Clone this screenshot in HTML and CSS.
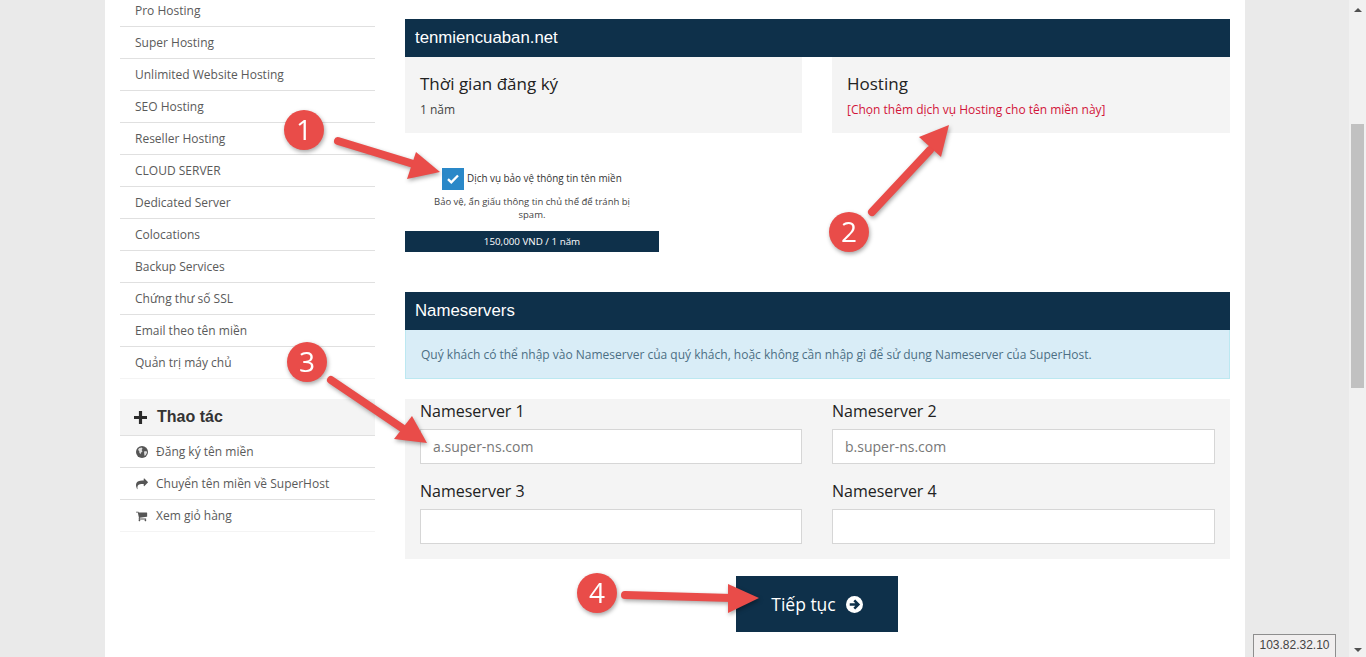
FILE: index.html
```html
<!DOCTYPE html>
<html lang="vi">
<head>
<meta charset="utf-8">
<title>Đăng ký tên miền</title>
<link rel="stylesheet" href="styles.css">
</head>
<body>
<div class="page">
  <aside class="sidebar">
    <ul class="menu">
      <li class="first">Pro Hosting</li>
      <li>Super Hosting</li>
      <li>Unlimited Website Hosting</li>
      <li>SEO Hosting</li>
      <li>Reseller Hosting</li>
      <li>CLOUD SERVER</li>
      <li>Dedicated Server</li>
      <li>Colocations</li>
      <li>Backup Services</li>
      <li>Chứng thư số SSL</li>
      <li>Email theo tên miền</li>
      <li class="last">Quản trị máy chủ</li>
    </ul>
    <div class="panel-head">
      <svg class="plus" viewBox="0 0 14 14"><path d="M5.3 0h3.4v5.3H14v3.4H8.7V14H5.3V8.7H0V5.3h5.3z"/></svg>
      <span>Thao tác</span>
    </div>
    <ul class="menu actions">
      <li>
        <svg class="ico" viewBox="0 0 12 12"><circle cx="6" cy="6" r="6" fill="#555"/><path d="M3 2.2l2.6-.6 1 1.2-1 1.3.9 1.2-1.5 1.4-.6 1.6-1-1.6-.2-1.8-1.2-.8zM8 5.6l2.4-.5.7 1.4-1.4 2.7-1.3.6z" fill="#ddd"/></svg>
        Đăng ký tên miền
      </li>
      <li>
        <svg class="ico" viewBox="0 0 1792 1792"><path fill="#555" d="M1792 640q0 26-19 45l-512 512q-19 19-45 19t-45-19-19-45v-256h-224q-98 0-175.500 6t-154 21.500-133 42.500-105.500 69.500-80 101-48.500 138.500-17.500 181q0 55 5 123 0 6 2.500 23.500t2.500 26.500q0 15-8.500 25t-23.500 10q-16 0-28-17-7-9-13-22t-13.500-30-10.500-24q-127-285-127-451 0-199 53-333 162-403 875-403h224v-256q0-26 19-45t45-19 45 19l512 512q19 19 19 45z"/></svg>
        Chuyển tên miền về SuperHost
      </li>
      <li class="last">
        <svg class="ico" viewBox="0 0 1792 1792"><path fill="#555" d="M640 1536q0 52-38 90t-90 38-90-38-38-90 38-90 90-38 90 38 38 90zm896 0q0 52-38 90t-90 38-90-38-38-90 38-90 90-38 90 38 38 90zm128-1088v512q0 24-16.500 42.500t-40.500 21.500l-1044 122q13 60 13 70 0 16-24 64h920q26 0 45 19t19 45-19 45-45 19h-1024q-26 0-45-19t-19-45q0-11 8-31.500t16-36 21.500-40 15.500-29.500l-177-823h-204q-26 0-45-19t-19-45 19-45 45-19h256q16 0 28.500 6.500t19.500 15.500 13 24.500 8 26 5.500 29.500 4.500 26h1201q26 0 45 19t19 45z"/></svg>
        Xem giỏ hàng
      </li>
    </ul>
  </aside>

  <main class="content">
    <h2 class="bar">tenmiencuaban.net</h2>
    <div class="two-col">
      <div class="info">
        <h3>Thời gian đăng ký</h3>
        <p>1 năm</p>
      </div>
      <div class="info">
        <h3>Hosting</h3>
        <p class="pick">[Chọn thêm dịch vụ Hosting cho tên miền này]</p>
      </div>
    </div>

    <div class="addon">
      <div class="addon-title">
        <span class="check"><svg viewBox="0 0 12 10"><path d="M1 5.200l3.300 3.200L11 1.500" fill="none" stroke="#fff" stroke-width="2.300"/></svg></span>
        <span class="addon-name">Dịch vụ bảo vệ thông tin tên miền</span>
      </div>
      <p class="addon-desc">Bảo vệ, ẩn giấu thông tin chủ thể để tránh bị spam.</p>
      <div class="addon-price">150,000 VND / 1 năm</div>
    </div>

    <h2 class="bar">Nameservers</h2>
    <div class="alert">Quý khách có thể nhập vào Nameserver của quý khách, hoặc không cần nhập gì để sử dụng Nameserver của SuperHost.</div>
    <form class="ns-form">
      <label class="field"><span>Nameserver 1</span><input type="text" placeholder="a.super-ns.com"></label>
      <label class="field"><span>Nameserver 2</span><input type="text" placeholder="b.super-ns.com"></label>
      <label class="field"><span>Nameserver 3</span><input type="text"></label>
      <label class="field"><span>Nameserver 4</span><input type="text"></label>
    </form>
    <div class="actions-row">
      <button class="next" type="button">Tiếp tục
        <svg viewBox="0 0 16 16"><circle cx="8" cy="8" r="8" fill="#fff"/><path d="M3.500 8h8M7.800 4.200L11.600 8l-3.800 3.800" fill="none" stroke="#0e304a" stroke-width="2.400"/></svg>
      </button>
    </div>
  </main>
</div>

<svg class="notes" viewBox="0 0 1366 657">
  <g class="note">
    <path class="shaft" d="M338 141L420 166"/>
    <path class="head" d="M416 152L407 179L440 172z"/>
    <circle cx="304" cy="130" r="20"/>
    <text x="304" y="140">1</text>
  </g>
  <g class="note">
    <path class="shaft" d="M872 212L930 150"/>
    <path class="head" d="M949 125L919 137L941 157z"/>
    <circle cx="849" cy="232" r="20"/>
    <text x="849" y="242">2</text>
  </g>
  <g class="note">
    <path class="shaft" d="M331 380L402 428"/>
    <path class="head" d="M427 443L394 439L412 416z"/>
    <circle cx="307" cy="362" r="20"/>
    <text x="307" y="372">3</text>
  </g>
  <g class="note">
    <path class="shaft" d="M625 595L732 598"/>
    <path class="head" d="M728 584L759 598L728 613z"/>
    <circle cx="597" cy="593" r="20"/>
    <text x="597" y="603">4</text>
  </g>
</svg>

<div class="ip">103.82.32.10</div>
<div class="scrollbar">
  <span class="up"></span>
  <span class="thumb"></span>
  <span class="down"></span>
</div>
</body>
</html>
```
FILE: styles.css
```css
* { box-sizing: border-box; }
html, body { margin: 0; height: 657px; overflow: hidden; }
body { background: #eaeaea; font-family: "Open Sans", sans-serif; color: #333; }

.page {
  width: 1140px;
  height: 657px;
  margin-left: 105px;
  padding: 0 15px;
  background: #fff;
  display: flex;
  gap: 30px;
  overflow: hidden;
}

.sidebar { width: 255px; flex: none; }
.menu { list-style: none; margin: 0; padding: 0; }
.menu li {
  height: 32px;
  padding-left: 15px;
  border-bottom: 1px solid #e0e0e0;
  font-size: 12px;
  line-height: 31px;
  color: #5a5a5a;
  white-space: nowrap;
}
.menu li.first { height: 27px; line-height: 21px; }
.menu li.last { border-bottom-color: #f4f4f4; }

.panel-head {
  height: 37px;
  margin-top: 20px;
  padding-left: 14px;
  background: #f4f4f4;
  border-bottom: 1px solid #e0e0e0;
  display: flex;
  align-items: center;
  gap: 10px;
  font: bold 16px "Liberation Sans", sans-serif;
  color: #333;
}
.plus { width: 13px; height: 13px; fill: #2b2b2b; }

.actions li { display: flex; align-items: center; gap: 8px; padding-left: 16px; }
.ico { width: 12px; height: 12px; flex: none; }

.content { width: 825px; flex: none; padding-top: 19px; }
.bar {
  margin: 0;
  height: 38px;
  padding-left: 10px;
  background: #0e304a;
  color: #fff;
  font: 500 16.800px/37px "Liberation Sans", sans-serif;
}

.two-col { display: grid; grid-template-columns: 397px 398px; gap: 30px; }
.info { height: 76px; padding: 14px 15px 0; background: #f4f4f4; }
.info h3 { margin: 0; font-size: 17px; font-weight: 400; line-height: 26px; color: #222; }
.info p { margin: 4px 0 0; font-size: 12px; line-height: 18px; color: #444; }
.info .pick { color: #d2143a; }

.addon { width: 254px; margin-top: 35px; text-align: center; }
.addon-title {
  height: 22px;
  display: flex;
  align-items: center;
  gap: 3px;
  padding-left: 37px;
  font-size: 9.900px;
  font-weight: 500;
  color: #333;
  white-space: nowrap;
}
.addon-name { margin-top: -2px; }
.check {
  width: 22px;
  height: 22px;
  flex: none;
  background: #2a88c8;
  display: flex;
  align-items: center;
  justify-content: center;
}
.check svg { width: 12px; height: 10px; }
.addon-desc { margin: 5px 20px 0; font-size: 9.500px; line-height: 13px; color: #444; }
.addon-price {
  height: 21px;
  margin-top: 10px;
  margin-bottom: 40px;
  background: #0e304a;
  color: #fff;
  font-size: 9.800px;
  font-weight: 500;
  line-height: 21px;
}

.alert {
  height: 49px;
  padding-left: 15px;
  background: #d9edf7;
  border: 1px solid #bce8f1;
  border-top: 0;
  font-size: 12px;
  line-height: 49px;
  color: #4c6f84;
  white-space: nowrap;
}

.ns-form {
  height: 160px;
  margin-top: 20px;
  padding: 0 15px;
  background: #f4f4f4;
  display: grid;
  grid-template-columns: 382px 383px;
  grid-auto-rows: 80px;
  column-gap: 30px;
}
.field span { display: block; height: 30px; font-size: 16px; line-height: 24px; color: #222; }
.field input {
  display: block;
  width: 100%;
  height: 35px;
  padding: 0 12px;
  background: #fff;
  border: 1px solid #d6d6d6;
  border-radius: 0;
  outline: 0;
  font: 14px "Open Sans", sans-serif;
}
.field input::placeholder { color: #777; opacity: 1; }

.actions-row { display: flex; justify-content: center; margin-top: 17px; padding-right: 1px; }
.next {
  width: 162px;
  height: 56px;
  border: 0;
  background: #0e304a;
  color: #fff;
  font: 17.500px "Open Sans", sans-serif;
  display: flex;
  align-items: center;
  justify-content: center;
  gap: 10px;
}
.next svg { width: 17px; height: 17px; }

.notes { position: absolute; left: 0; top: 0; width: 1366px; height: 657px; pointer-events: none; }
.note { filter: drop-shadow(1px 2px 2px rgba(0,0,0,.35)); }
.note .shaft { fill: none; stroke: #e94c49; stroke-width: 8; stroke-linecap: round; }
.note .head, .note circle { fill: #e94c49; }
.note text { fill: #fff; font: 28px "Open Sans", sans-serif; text-anchor: middle; }

.ip {
  position: absolute;
  left: 1253px;
  top: 634px;
  width: 83px;
  height: 24px;
  background: #f1efef;
  border: 1px solid #8e8e8e;
  font: 12px/21px "Liberation Sans", sans-serif;
  text-align: center;
  color: #444;
}

.scrollbar { position: absolute; right: 0; top: 0; width: 17px; height: 657px; background: #f1f1f1; }
.thumb { position: absolute; left: 2px; top: 124px; width: 13px; height: 264px; background: #c1c1c1; }
.up, .down { position: absolute; left: 5px; width: 0; height: 0; border: 4px solid transparent; }
.up { top: 4px; border-bottom-color: #505050; }
.down { bottom: 1px; border-top-color: #505050; }
```
